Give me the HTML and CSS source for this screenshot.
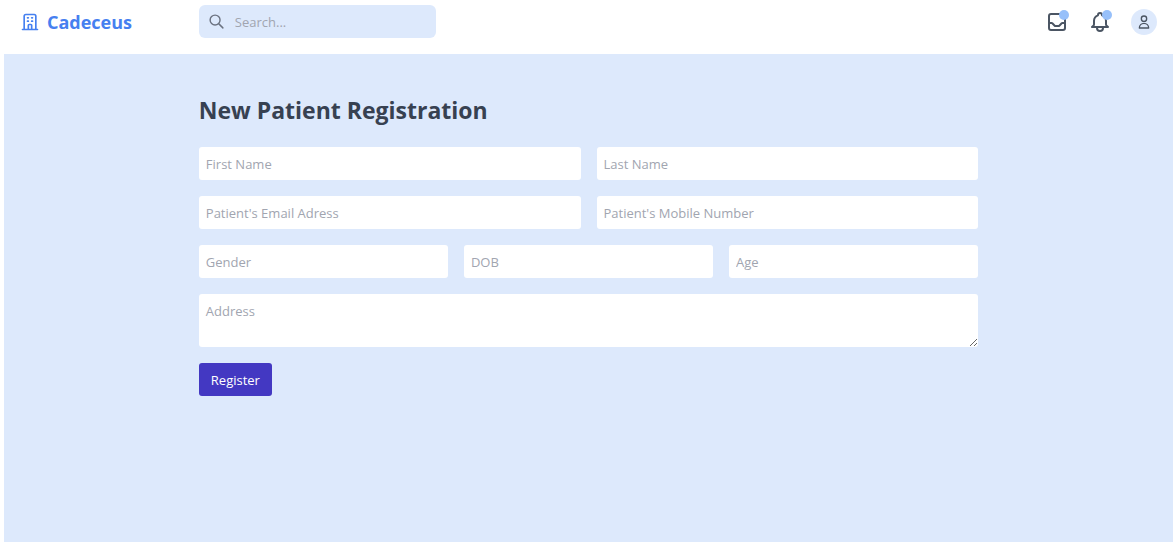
FILE: index.html
```html
<!DOCTYPE html>
<html lang="en">
<head>
<meta charset="utf-8">
<meta name="viewport" content="width=device-width, initial-scale=1">
<title>Cadeceus</title>
<link rel="stylesheet" href="styles.css">
</head>
<body>
<header class="topbar">
  <a class="brand" href="#">
    <svg class="icon brand-icon" viewBox="0 0 24 24" aria-hidden="true"><path d="M19 21V5a2 2 0 00-2-2H7a2 2 0 00-2 2v16m14 0h2m-2 0h-5m-9 0H3m2 0h5M9 7h1m-1 4h1m4-4h1m-1 4h1m-5 10v-5a1 1 0 011-1h2a1 1 0 011 1v5m-4 0h4"/></svg>
    <span>Cadeceus</span>
  </a>
  <form class="search" role="search">
    <svg class="icon search-icon" viewBox="0 0 24 24" aria-hidden="true"><path d="M21 21l-6-6m2-5a7 7 0 11-14 0 7 7 0 0114 0z"/></svg>
    <input class="search-input" type="search" placeholder="Search..." aria-label="Search">
  </form>
  <nav class="actions" aria-label="Account">
    <button class="action" type="button" aria-label="Inbox">
      <svg class="icon action-icon" viewBox="0 0 24 24" aria-hidden="true"><path d="M20 13V6a2 2 0 00-2-2H6a2 2 0 00-2 2v7m16 0v5a2 2 0 01-2 2H6a2 2 0 01-2-2v-5m16 0h-2.586a1 1 0 00-.707.293l-2.414 2.414a1 1 0 01-.707.293h-3.172a1 1 0 01-.707-.293l-2.414-2.414A1 1 0 006.586 13H4"/></svg>
      <span class="badge"></span>
    </button>
    <button class="action" type="button" aria-label="Notifications">
      <svg class="icon action-icon" viewBox="0 0 24 24" aria-hidden="true"><path d="M15 17h5l-1.405-1.405A2.032 2.032 0 0118 14.158V11a6.002 6.002 0 00-4-5.659V5a2 2 0 10-4 0v.341C7.67 6.165 6 8.388 6 11v3.159c0 .538-.214 1.055-.595 1.436L4 17h5m6 0v1a3 3 0 11-6 0v-1m6 0H9"/></svg>
      <span class="badge"></span>
    </button>
    <button class="avatar" type="button" aria-label="Profile">
      <svg class="icon avatar-icon" viewBox="0 0 24 24" aria-hidden="true"><path d="M16 7a4 4 0 11-8 0 4 4 0 018 0zM12 14a7 7 0 00-7 7h14a7 7 0 00-7-7z"/></svg>
    </button>
  </nav>
</header>
<main class="page">
  <form class="registration">
    <h1 class="title">New Patient Registration</h1>
    <div class="row">
      <input class="field" type="text" placeholder="First Name" aria-label="First Name">
      <input class="field" type="text" placeholder="Last Name" aria-label="Last Name">
    </div>
    <div class="row">
      <input class="field" type="email" placeholder="Patient's Email Adress" aria-label="Patient's Email Adress">
      <input class="field" type="tel" placeholder="Patient's Mobile Number" aria-label="Patient's Mobile Number">
    </div>
    <div class="row">
      <input class="field" type="text" placeholder="Gender" aria-label="Gender">
      <input class="field" type="text" placeholder="DOB" aria-label="DOB">
      <input class="field" type="text" placeholder="Age" aria-label="Age">
    </div>
    <textarea class="field address" rows="2" placeholder="Address" aria-label="Address"></textarea>
    <button class="submit" type="button">Register</button>
  </form>
</main>
</body>
</html>
```
FILE: styles.css
```css
* {
  box-sizing: border-box;
}

body {
  display: flex;
  flex-direction: column;
  min-height: 100vh;
  margin: 0;
  padding-left: 4px;
  background: #fff;
  color: #374151;
  font-family: "Segoe UI", "Open Sans", "Noto Sans", sans-serif;
  font-size: 13px;
  line-height: 20px;
}

input,
textarea,
button {
  margin: 0;
  border: 0;
  font: inherit;
}

button {
  cursor: pointer;
}

.icon {
  display: block;
  flex: none;
  fill: none;
  stroke: currentColor;
  stroke-width: 2;
  stroke-linecap: round;
  stroke-linejoin: round;
}

.topbar {
  display: grid;
  grid-template-columns: 1fr 3fr 2fr;
  align-items: center;
  padding: 5px 0 16px;
}

.brand {
  display: flex;
  align-items: center;
  gap: 7px;
  padding-left: 16px;
  color: #4680f0;
  font-size: 18px;
  font-weight: 700;
  text-decoration: none;
}

.brand-icon {
  width: 20px;
  height: 20px;
}

.search {
  display: flex;
  align-items: center;
  gap: 10px;
  width: 237px;
  height: 33px;
  padding: 0 9px;
  border-radius: 6px;
  background: #dde9fc;
  color: #6b7280;
}

.search-icon {
  width: 17px;
  height: 17px;
}

.search-input {
  flex: 1;
  min-width: 0;
  padding: 0;
  background: transparent;
  color: #374151;
}

.actions {
  display: flex;
  align-items: center;
  justify-content: flex-end;
  gap: 19px;
  padding-right: 16px;
}

.action {
  position: relative;
  padding: 0;
  background: transparent;
  color: #4b5563;
}

.action-icon {
  width: 24px;
  height: 24px;
}

.badge {
  position: absolute;
  top: 0;
  right: 0;
  width: 10px;
  height: 10px;
  border-radius: 50%;
  background: #97c0fa;
}

.avatar {
  display: grid;
  place-items: center;
  width: 26px;
  height: 26px;
  padding: 0;
  border-radius: 50%;
  background: #dde9fc;
  color: #4b5563;
}

.avatar-icon {
  width: 16px;
  height: 16px;
}

.page {
  flex: 1;
  padding: 40px calc(100% / 6);
  background: #dde9fc;
}

.registration {
  display: flex;
  flex-direction: column;
  gap: 16px;
}

.title {
  margin: 0 0 4px;
  font-size: 23px;
  font-weight: 700;
  line-height: 33px;
}

.row {
  display: flex;
  gap: 16px;
}

.field {
  flex: 1;
  min-width: 0;
  height: 33px;
  padding: 7px;
  border-radius: 3px;
  background: #fff;
  color: #374151;
}

.field::placeholder,
.search-input::placeholder {
  color: #a1a5b0;
  opacity: 1;
}

.address {
  display: block;
  flex: none;
  width: 100%;
  height: 53px;
  resize: vertical;
}

.submit {
  align-self: flex-start;
  height: 33px;
  padding: 0 12px;
  border-radius: 3px;
  background: #4338c2;
  color: #fff;
}
```
